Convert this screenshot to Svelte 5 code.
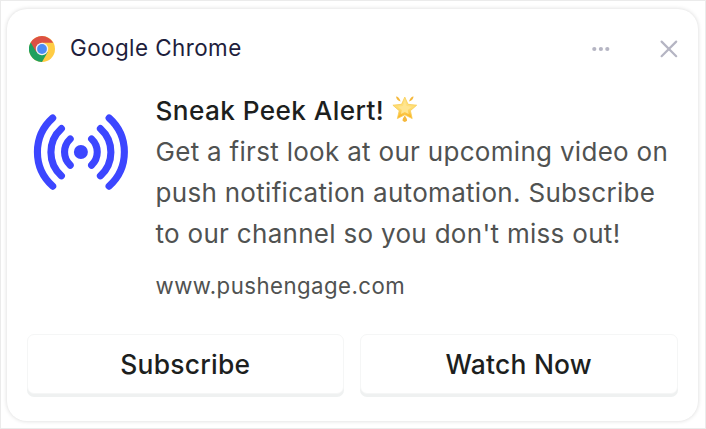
<script>
  const lines = [
    'Get a first look at our upcoming video on',
    'push notification automation. Subscribe',
    "to our channel so you don't miss out!"
  ];
  const actions = ['Subscribe', 'Watch Now'];
</script>

<main class="frame">
  <article class="card">
    <header>
      <svg class="chrome" width="26" height="26" viewBox="0 0 26 26">
        <circle cx="13" cy="13" r="13" fill="#fc4" />
        <path d="M13 13 1.7 6.5A13 13 0 0 0 13 26L18.6 16.2Z" fill="#1fa060" />
        <path d="M1.7 6.5A13 13 0 0 1 24.2 6.7H13L7.4 16.2Z" fill="#dc5044" />
        <circle cx="13" cy="13" r="6.2" fill="#f3f3f3" />
        <circle cx="13" cy="13" r="4.9" fill="#4c8bf5" />
      </svg>
      <span class="app">Google Chrome</span>
      <svg class="dots" width="18" height="6" viewBox="0 0 18 6" fill="#b5b5c3">
        <circle cx="2.3" cy="3" r="2.1" /><circle cx="8.9" cy="3" r="2.1" /><circle cx="15.3" cy="3" r="2.1" />
      </svg>
      <svg class="close" width="18" height="18" viewBox="0 0 18 18" stroke="#b5b5c3" stroke-width="2.2" stroke-linecap="round">
        <path d="M1.6 1.6 16.2 16.2M16.2 1.6 1.6 16.2" />
      </svg>
    </header>

    <section class="content">
      <svg class="signal" width="96" height="76" viewBox="33 114 96 76" fill="none" stroke="#3c46ff" stroke-width="7.1" stroke-linecap="round">
        <circle cx="80.9" cy="152" r="7" fill="#3c46ff" stroke="none" />
        <path d="M70.2 139a18 18 0 0 0 0 26.2M61.4 128.6a31.8 31.8 0 0 0 0 47.2M52.7 118a45.7 45.7 0 0 0 0 68.2" />
        <path d="M91.6 139a18 18 0 0 1 0 26.2M100.4 128.6a31.8 31.8 0 0 1 0 47.2M109.1 118a45.7 45.7 0 0 1 0 68.2" />
      </svg>
      <div class="copy">
        <h1>
          <span>Sneak Peek Alert!</span>
          <svg width="26" height="28" viewBox="0 0 26 28">
            <defs>
              <linearGradient id="gold" x1="0" y1="0" x2="0" y2="1">
                <stop offset="0" stop-color="#ffe48a" /><stop offset=".55" stop-color="#ffdc70" /><stop offset="1" stop-color="#f9ad16" />
              </linearGradient>
            </defs>
            <path d="M12.8 2.1 16 9.3 24.7 10.2 18.4 15.7 20.2 23.6 12.8 19.8 5.4 23.6 7.2 15.7.9 10.2 9.6 9.3Z" fill="url(#gold)" stroke="#f8cd56" stroke-width=".8" stroke-linejoin="round" />
            <path d="M12.8 6 14.7 11.1 19.8 11.8 15.8 15 16.7 19 12.8 17 8.9 19 9.8 15 5.8 11.8 10.9 11.1Z" fill="#ffe591" />
            <path d="M4 1.6Q7 1.6 8.6 6.4Q4.5 5.6 4 1.6ZM21.6 1.6Q18.6 1.6 17 6.4Q21.1 5.6 21.6 1.6ZM12.8 20.6Q10.2 24.2 10.6 25.8Q12.8 28 15 25.8Q15.4 24.2 12.8 20.6Z" fill="#f5b83c" />
          </svg>
        </h1>
        <div class="body">
          {#each lines as line}<div>{line}</div>{/each}
        </div>
        <div class="url">www.pushengage.com</div>
      </div>
    </section>

    <footer>
      {#each actions as action}<button>{action}</button>{/each}
    </footer>
  </article>
</main>

<style>
  :global(body) { background: #fff; }
  .frame {
    box-sizing: border-box;
    width: 706px;
    height: 429px;
    padding: 8px 7px 7px 6px;
    border: 1px solid #ebebeb;
    font-family: Inter, sans-serif;
    overflow: hidden;
  }
  .card {
    display: flex;
    flex-direction: column;
    box-sizing: border-box;
    width: 690.5px;
    height: 412px;
    padding: 0 20px 0 19.5px;
    border-radius: 20px;
    background: #fff;
    box-shadow: 0 0 4px rgba(0, 0, 0, 0.16);
  }
  header { display: flex; align-items: center; height: 79px; padding-left: 2.5px; }
  .app { margin: -2px 0 0 15px; font-size: 22.4px; letter-spacing: 0.45px; color: #1e1e3c; white-space: nowrap; }
  .dots { margin-left: auto; margin-right: 50px; }
  .content { display: flex; height: 246px; }
  .signal { margin: 26px 0 0 6.5px; flex: none; }
  .copy { margin-left: 26.5px; white-space: nowrap; }
  h1 { display: flex; align-items: center; height: 42px; margin: 1px 0 0; font-size: 26.2px; font-weight: 500; letter-spacing: 0.4px; color: #1d1f1e; }
  h1 svg { margin: -2px 0 0 8px; }
  .body { font-size: 26px; line-height: 41px; letter-spacing: 0.3px; color: #505251; }
  .url { margin-top: 17px; font-size: 22.2px; line-height: 30px; letter-spacing: 0.47px; color: #505251; }
  footer { display: flex; gap: 16px; }
  button {
    box-sizing: border-box;
    flex: 1;
    height: 60px;
    padding: 0 0 1px;
    border: 1px solid #f5f6f6;
    border-radius: 7px;
    background: #fff;
    box-shadow: 0 3px 0 #eff1f1;
    font: 500 26.4px Inter, sans-serif;
    letter-spacing: 0.25px;
    color: #1d1f1e;
  }
</style>
